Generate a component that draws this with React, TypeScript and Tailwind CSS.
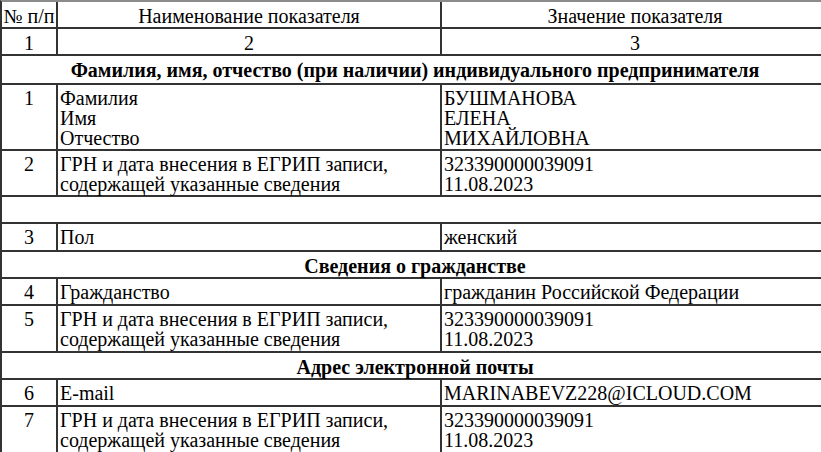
const SERIF = "[font-family:'Liberation_Serif','Times_New_Roman',serif]"

type Row =
  | { kind: "head"; cells: string[]; h: string }
  | { kind: "section"; title: string; h: string }
  | { kind: "data"; n: string; name: string[]; value: string[]; h: string }

const GRN = ["ГРН и дата внесения в ЕГРИП записи,", "содержащей указанные сведения"]
const GRN_VALUE = ["323390000039091", "11.08.2023"]

const ROWS: Row[] = [
  { kind: "head", cells: ["№ п/п", "Наименование показателя", "Значение показателя"], h: "h-[27px]" },
  { kind: "head", cells: ["1", "2", "3"], h: "h-[27px]" },
  { kind: "section", title: "Фамилия, имя, отчество (при наличии) индивидуального предпринимателя", h: "h-[29px]" },
  { kind: "data", n: "1", name: ["Фамилия", "Имя", "Отчество"], value: ["БУШМАНОВА", "ЕЛЕНА", "МИХАЙЛОВНА"], h: "h-[66px]" },
  { kind: "data", n: "2", name: GRN, value: GRN_VALUE, h: "h-[46px]" },
  { kind: "section", title: "", h: "h-[27px]" },
  { kind: "data", n: "3", name: ["Пол"], value: ["женский"], h: "h-[28px]" },
  { kind: "section", title: "Сведения о гражданстве", h: "h-[27px]" },
  { kind: "data", n: "4", name: ["Гражданство"], value: ["гражданин Российской Федерации"], h: "h-[27px]" },
  { kind: "data", n: "5", name: GRN, value: GRN_VALUE, h: "h-[47px]" },
  { kind: "section", title: "Адрес электронной почты", h: "h-[27px]" },
  { kind: "data", n: "6", name: ["E-mail"], value: ["MARINABEVZ228@ICLOUD.COM"], h: "h-[27px]" },
  { kind: "data", n: "7", name: GRN, value: GRN_VALUE, h: "h-[60px]" },
]

function Lines({ lines }: { lines: string[] }) {
  return (
    <>
      {lines.map((l, i) => (
        <div key={i}>{l}</div>
      ))}
    </>
  )
}

export default function App() {
  return (
    <div className={`w-[821px] h-[452px] overflow-hidden bg-white text-black ${SERIF}`}>
      <div className="w-[828px] border-t-2 border-l-2 border-t-[#8c8c8c] border-l-[#333] text-[20px] leading-5">
        {ROWS.map((row, i) => {
          if (row.kind === "section") {
            return (
              <div
                key={i}
                className={`${row.h} box-border border-b-2 border-[#333] pt-[4px] text-center font-bold`}
              >
                {row.title}
              </div>
            )
          }
          if (row.kind === "head") {
            return (
              <div key={i} className={`${row.h} box-border flex border-b-2 border-[#333]`}>
                <div className="w-[56px] shrink-0 border-r-2 border-[#333] pt-[4px] text-center">{row.cells[0]}</div>
                <div className="w-[384px] shrink-0 border-r-2 border-[#333] pt-[4px] text-center">{row.cells[1]}</div>
                <div className="flex-1 pt-[4px] text-center">{row.cells[2]}</div>
              </div>
            )
          }
          return (
            <div key={i} className={`${row.h} box-border flex border-b-2 border-[#333]`}>
              <div className="w-[56px] shrink-0 border-r-2 border-[#333] pt-[3px] text-center">{row.n}</div>
              <div className="w-[384px] shrink-0 border-r-2 border-[#333] pt-[3px] pl-[2px]">
                <Lines lines={row.name} />
              </div>
              <div className="flex-1 pt-[3px] pl-[2px]">
                <Lines lines={row.value} />
              </div>
            </div>
          )
        })}
      </div>
    </div>
  )
}
